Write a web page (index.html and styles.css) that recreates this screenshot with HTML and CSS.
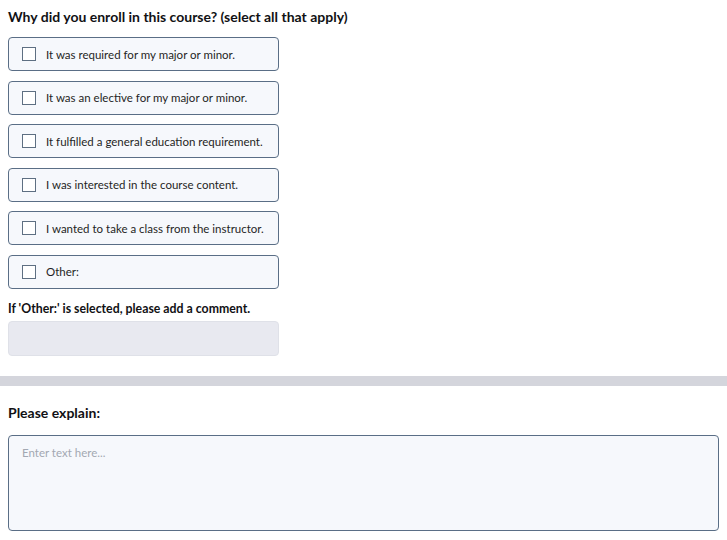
FILE: index.html
```html
<!DOCTYPE html>
<html>
<head>
<meta charset="utf-8">
<link rel="stylesheet" href="styles.css">
</head>
<body>
<section class="question">
  <h2 class="q-title">Why did you enroll in this course? (select all that apply)</h2>
  <div class="options">
    <label class="option"><span class="box"></span><span class="opt-text">It was required for my major or minor.</span></label>
    <label class="option"><span class="box"></span><span class="opt-text">It was an elective for my major or minor.</span></label>
    <label class="option"><span class="box"></span><span class="opt-text">It fulfilled a general education requirement.</span></label>
    <label class="option"><span class="box"></span><span class="opt-text">I was interested in the course content.</span></label>
    <label class="option"><span class="box"></span><span class="opt-text">I wanted to take a class from the instructor.</span></label>
    <label class="option"><span class="box"></span><span class="opt-text">Other:</span></label>
  </div>
  <div class="comment-label">If 'Other:' is selected, please add a comment.</div>
  <div class="comment-box"></div>
</section>
<div class="divider"></div>
<section class="question explain">
  <h2 class="q-title large">Please explain:</h2>
  <div class="textarea"><span class="placeholder">Enter text here...</span></div>
</section>
</body>
</html>
```
FILE: styles.css
```css
html, body {
  margin: 0;
  padding: 0;
  background: #fff;
  font-family: Lato, "Open Sans", sans-serif;
  color: #1b1b1f;
}
.question {
  padding: 8px 8px 0 8px;
}
.q-title {
  margin: 0;
  font-size: 14px;
  line-height: 18px;
  font-weight: 700;
  color: #111114;
}
.options {
  margin-top: 11px;
  width: 271px;
  display: flex;
  flex-direction: column;
  gap: 9.6px;
}
.option {
  box-sizing: border-box;
  height: 34px;
  border: 1px solid #5a6e86;
  border-radius: 4px;
  background: #f6f8fc;
  display: flex;
  align-items: center;
  padding-left: 13px;
}
.box {
  box-sizing: border-box;
  width: 14px;
  height: 14px;
  border: 1px solid #5e6f82;
  background: #fff;
  flex: none;
}
.opt-text {
  margin-left: 10px;
  font-size: 11.5px;
  color: #1f1f24;
}
.comment-label {
  margin-top: 12px;
  font-size: 12.3px;
  line-height: 16px;
  font-weight: 700;
  color: #111114;
}
.comment-box {
  box-sizing: border-box;
  margin-top: 4px;
  width: 271px;
  height: 35px;
  background: #e8e9f0;
  border: 1px solid #dfe1e8;
  border-radius: 4px;
}
.divider {
  margin-top: 20px;
  height: 10px;
  background: #d4d5dc;
}
.explain {
  padding-top: 18px;
}
.q-title.large {
  font-size: 14px;
  line-height: 18px;
}
.textarea {
  box-sizing: border-box;
  margin-top: 13px;
  height: 96px;
  border: 1px solid #5a6e86;
  border-radius: 4px;
  background: #f6f8fc;
  padding: 5px 13px;
}
.placeholder {
  font-size: 11.5px;
  color: #a3a8b2;
}
```
